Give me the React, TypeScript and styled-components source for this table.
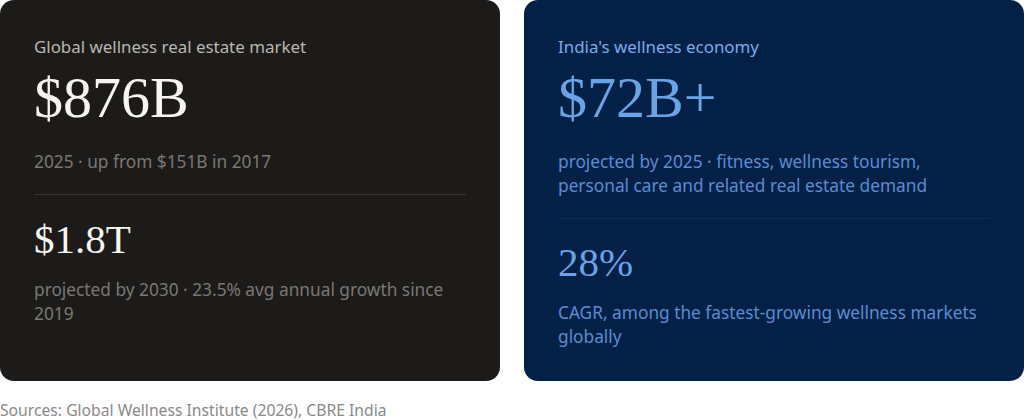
import React from "react";
import styled, { createGlobalStyle } from "styled-components";

const GlobalStyle = createGlobalStyle`
  html, body {
    margin: 0;
    padding: 0;
    background: #ffffff;
  }
  body {
    font-family: "Noto Sans", "Open Sans", sans-serif;
  }
`;

type Tone = "dark" | "navy";

const palette = {
  dark: {
    bg: "#1c1b19",
    label: "#bab7b0",
    value: "#f7f5f0",
    note: "#7a7873",
    rule: "#35332f",
  },
  navy: {
    bg: "#032046",
    label: "#7aabea",
    value: "#6aa3e6",
    note: "#5a8dd2",
    rule: "#0e2c55",
  },
};

const Page = styled.div`
  width: 1024px;
  height: 420px;
  display: flex;
  flex-direction: column;
`;

const Grid = styled.div`
  display: grid;
  grid-template-columns: 1fr 1fr;
  gap: 24px;
`;

const Card = styled.section<{ $tone: Tone }>`
  background: ${(p) => palette[p.$tone].bg};
  border-radius: 14px;
  padding: 36px 34px 32px;
  height: 381px;
  box-sizing: border-box;
  display: flex;
  flex-direction: column;
`;

const Block = styled.div<{ $first?: boolean }>`
  display: flex;
  flex-direction: column;
  padding-top: ${(p) => (p.$first ? "0" : "22px")};
`;

const Label = styled.div<{ $tone: Tone }>`
  font-size: 16.9px;
  line-height: 22px;
  color: ${(p) => palette[p.$tone].label};
  margin-bottom: 8px;
`;

const Value = styled.div<{ $tone: Tone; $big?: boolean }>`
  font-family: "Liberation Serif", "Times New Roman", serif;
  font-size: ${(p) => (p.$big ? "58px" : "41px")};
  line-height: 1.1;
  color: ${(p) => palette[p.$tone].value};
  margin-bottom: ${(p) => (p.$big ? "20px" : "16px")};
`;

const Note = styled.p<{ $tone: Tone }>`
  margin: 0;
  font-size: 17.3px;
  line-height: 24px;
  color: ${(p) => palette[p.$tone].note};
`;

const Rule = styled.hr<{ $tone: Tone }>`
  border: none;
  height: 1px;
  background: ${(p) => palette[p.$tone].rule};
  margin: 20px 0 0;
  width: 100%;
`;

const Sources = styled.div`
  margin-top: 19px;
  font-size: 15.7px;
  line-height: 20px;
  color: #8a8a8a;
`;

type Stat = { value: string; note: string };

type CardData = {
  tone: Tone;
  label: string;
  main: Stat;
  extra: Stat;
};

const cards: CardData[] = [
  {
    tone: "dark",
    label: "Global wellness real estate market",
    main: { value: "$876B", note: "2025 · up from $151B in 2017" },
    extra: {
      value: "$1.8T",
      note: "projected by 2030 · 23.5% avg annual growth since 2019",
    },
  },
  {
    tone: "navy",
    label: "India's wellness economy",
    main: {
      value: "$72B+",
      note: "projected by 2025 · fitness, wellness tourism, personal care and related real estate demand",
    },
    extra: {
      value: "28%",
      note: "CAGR, among the fastest-growing wellness markets globally",
    },
  },
];

const App: React.FC = () => {
  return (
    <Page>
      <GlobalStyle />
      <Grid>
        {cards.map((c) => (
          <Card key={c.label} $tone={c.tone}>
            <Block $first>
              <Label $tone={c.tone}>{c.label}</Label>
              <Value $tone={c.tone} $big>
                {c.main.value}
              </Value>
              <Note $tone={c.tone}>{c.main.note}</Note>
            </Block>
            <Rule $tone={c.tone} />
            <Block>
              <Value $tone={c.tone}>{c.extra.value}</Value>
              <Note $tone={c.tone}>{c.extra.note}</Note>
            </Block>
          </Card>
        ))}
      </Grid>
      <Sources>Sources: Global Wellness Institute (2026), CBRE India</Sources>
    </Page>
  );
};

export default App;
